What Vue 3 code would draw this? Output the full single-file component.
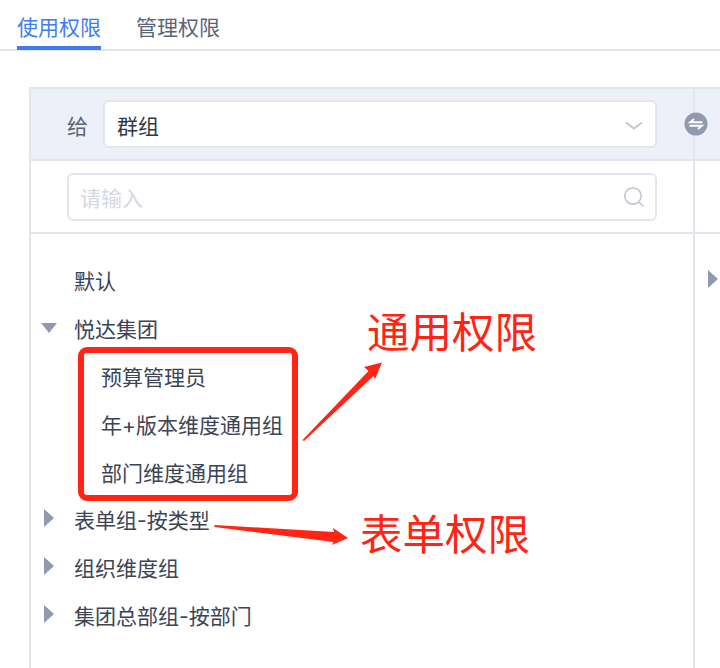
<template>
  <div class="page">
    <div class="tabs">
      <div
        v-for="(tab, i) in tabs"
        :key="tab"
        class="tab"
        :class="{ active: i === 0 }"
      >
        {{ tab }}
      </div>
    </div>

    <div class="panel">
      <div class="left">
        <div class="head">
          <span class="give">给</span>
          <div class="select">
            <span>群组</span>
            <svg class="chevron" width="18" height="10" viewBox="0 0 18 10">
              <path d="M1 1.5 9 7.5 17 1.5" fill="none" stroke="#c3c8d3" stroke-width="2" />
            </svg>
          </div>
        </div>
        <div class="search-row">
          <div class="search">
            <span class="placeholder">请输入</span>
            <svg width="22" height="22" viewBox="0 0 22 22">
              <circle cx="10" cy="10" r="8.2" fill="none" stroke="#c3c8d3" stroke-width="1.7" />
              <path d="M16 16 20.5 20.5" fill="none" stroke="#c3c8d3" stroke-width="1.7" />
            </svg>
          </div>
        </div>
        <div class="tree">
          <div
            v-for="node in nodes"
            :key="node.label"
            class="node"
            :class="{ child: node.child }"
          >
            <span class="arrow" :class="node.arrow"></span>
            <span>{{ node.label }}</span>
          </div>
        </div>
      </div>

      <div class="right">
        <div class="right-head"></div>
        <div class="right-search"></div>
        <div class="right-body">
          <span class="arrow closed"></span>
        </div>
      </div>

      <span class="swap">
        <svg width="24" height="24" viewBox="0 0 24 24">
          <circle cx="12" cy="12" r="11.5" fill="#8f99af" />
          <path d="M18.5 10.2H6.2L10 7M5.5 13.8H17.8L14 17" fill="none" stroke="#fff" stroke-width="1.9" />
        </svg>
      </span>
    </div>

    <div class="mark-box"></div>
    <svg class="mark-arrows" width="720" height="668" viewBox="0 0 720 668">
      <path d="M302.5 440 368.5 371 364 367 382 362.5 375 379 373.5 376 304 441Z" fill="#ff2413" />
      <path d="M214.5 525 334 532 333 528 348 538 332 545 333.5 542 214.5 527Z" fill="#ff2413" />
    </svg>
    <div class="mark-text one">通用权限</div>
    <div class="mark-text two">表单权限</div>
  </div>
</template>

<script setup>
const tabs = ['使用权限', '管理权限']

const nodes = [
  { label: '默认', arrow: 'none' },
  { label: '悦达集团', arrow: 'open' },
  { label: '预算管理员', arrow: 'none', child: true },
  { label: '年+版本维度通用组', arrow: 'none', child: true },
  { label: '部门维度通用组', arrow: 'none', child: true },
  { label: '表单组-按类型', arrow: 'closed' },
  { label: '组织维度组', arrow: 'closed' },
  { label: '集团总部组-按部门', arrow: 'closed' }
]
</script>

<style>
html,
body {
  margin: 0;
  background: #fff;
  overflow: hidden;
}
</style>

<style scoped>
.page {
  position: relative;
  width: 720px;
  height: 668px;
  overflow: hidden;
  background: #fff;
  font-family: Inter, "Noto Sans CJK SC", sans-serif;
  font-size: 21px;
  color: #3c4456;
}

.tabs {
  display: flex;
  gap: 35px;
  height: 49px;
  padding-left: 17px;
  border-bottom: 2px solid #e2e5ec;
}

.tab {
  height: 50px;
  line-height: 56px;
  color: #5b6478;
  box-sizing: border-box;
}

.tab.active {
  color: #3f7cf0;
  border-bottom: 4px solid #3f7cf0;
}

.panel {
  position: relative;
  display: flex;
  width: 720px;
  height: 581px;
  margin: 36px 0 0 29px;
  border-top: 2px solid #e2e5ec;
  border-left: 2px solid #e2e5ec;
}

.left {
  flex: none;
  width: 662px;
}

.head {
  display: flex;
  align-items: center;
  height: 70px;
  padding-left: 36px;
  background: #edf0f8;
  border-bottom: 2px solid #e2e5ec;
}

.give {
  width: 36px;
  padding-top: 2px;
  color: #5b6478;
}

.select {
  display: flex;
  align-items: center;
  justify-content: space-between;
  box-sizing: border-box;
  width: 554px;
  height: 48px;
  padding: 2px 12px 0 12px;
  background: #fff;
  border: 2px solid #e2e5ec;
  border-radius: 6px;
  color: #303749;
}

.chevron {
  margin-top: 1px;
}

.search-row {
  display: flex;
  align-items: center;
  height: 71px;
  padding-left: 36px;
  border-bottom: 2px solid #e2e5ec;
}

.search {
  display: flex;
  align-items: center;
  justify-content: space-between;
  box-sizing: border-box;
  width: 590px;
  height: 48px;
  padding: 0 10px 0 12px;
  border: 2px solid #e2e5ec;
  border-radius: 6px;
}

.placeholder {
  margin-left: -1px;
  color: #d5d8df;
}

.tree {
  padding-top: 22px;
}

.node {
  display: flex;
  align-items: center;
  height: 47.9px;
  padding-left: 43px;
  white-space: nowrap;
}

.node.child {
  padding-left: 70px;
}

.arrow {
  position: absolute;
  left: 13px;
}

.arrow.none {
  display: none;
}

.arrow.open {
  width: 0;
  height: 0;
  margin-left: -3px;
  border-left: 8px solid transparent;
  border-right: 8px solid transparent;
  border-top: 10px solid #8f99af;
}

.arrow.closed {
  width: 0;
  height: 0;
  margin-top: -2px;
  border-top: 9px solid transparent;
  border-bottom: 9px solid transparent;
  border-left: 10px solid #8f99af;
}

.right {
  flex: none;
  width: 26px;
  border-left: 2px solid #e2e5ec;
}

.right-head {
  height: 70px;
  background: #edf0f8;
  border-bottom: 2px solid #e2e5ec;
}

.right-search {
  height: 71px;
  border-bottom: 2px solid #e2e5ec;
}

.right-body {
  position: relative;
  padding-top: 38px;
}

.right-body .arrow {
  left: 13px;
}

.swap {
  position: absolute;
  left: 653px;
  top: 23px;
  width: 24px;
  height: 24px;
}

.mark-box {
  position: absolute;
  left: 78px;
  top: 347px;
  width: 220px;
  height: 154px;
  box-sizing: border-box;
  border: 6px solid #ff2413;
  border-radius: 9px;
}

.mark-arrows {
  position: absolute;
  left: 0;
  top: 0;
}

.mark-text {
  position: absolute;
  font-size: 42.5px;
  line-height: 50px;
  color: #ff2413;
  white-space: nowrap;
}

.mark-text.one {
  left: 367px;
  top: 308px;
}

.mark-text.two {
  left: 360px;
  top: 510px;
}
</style>
